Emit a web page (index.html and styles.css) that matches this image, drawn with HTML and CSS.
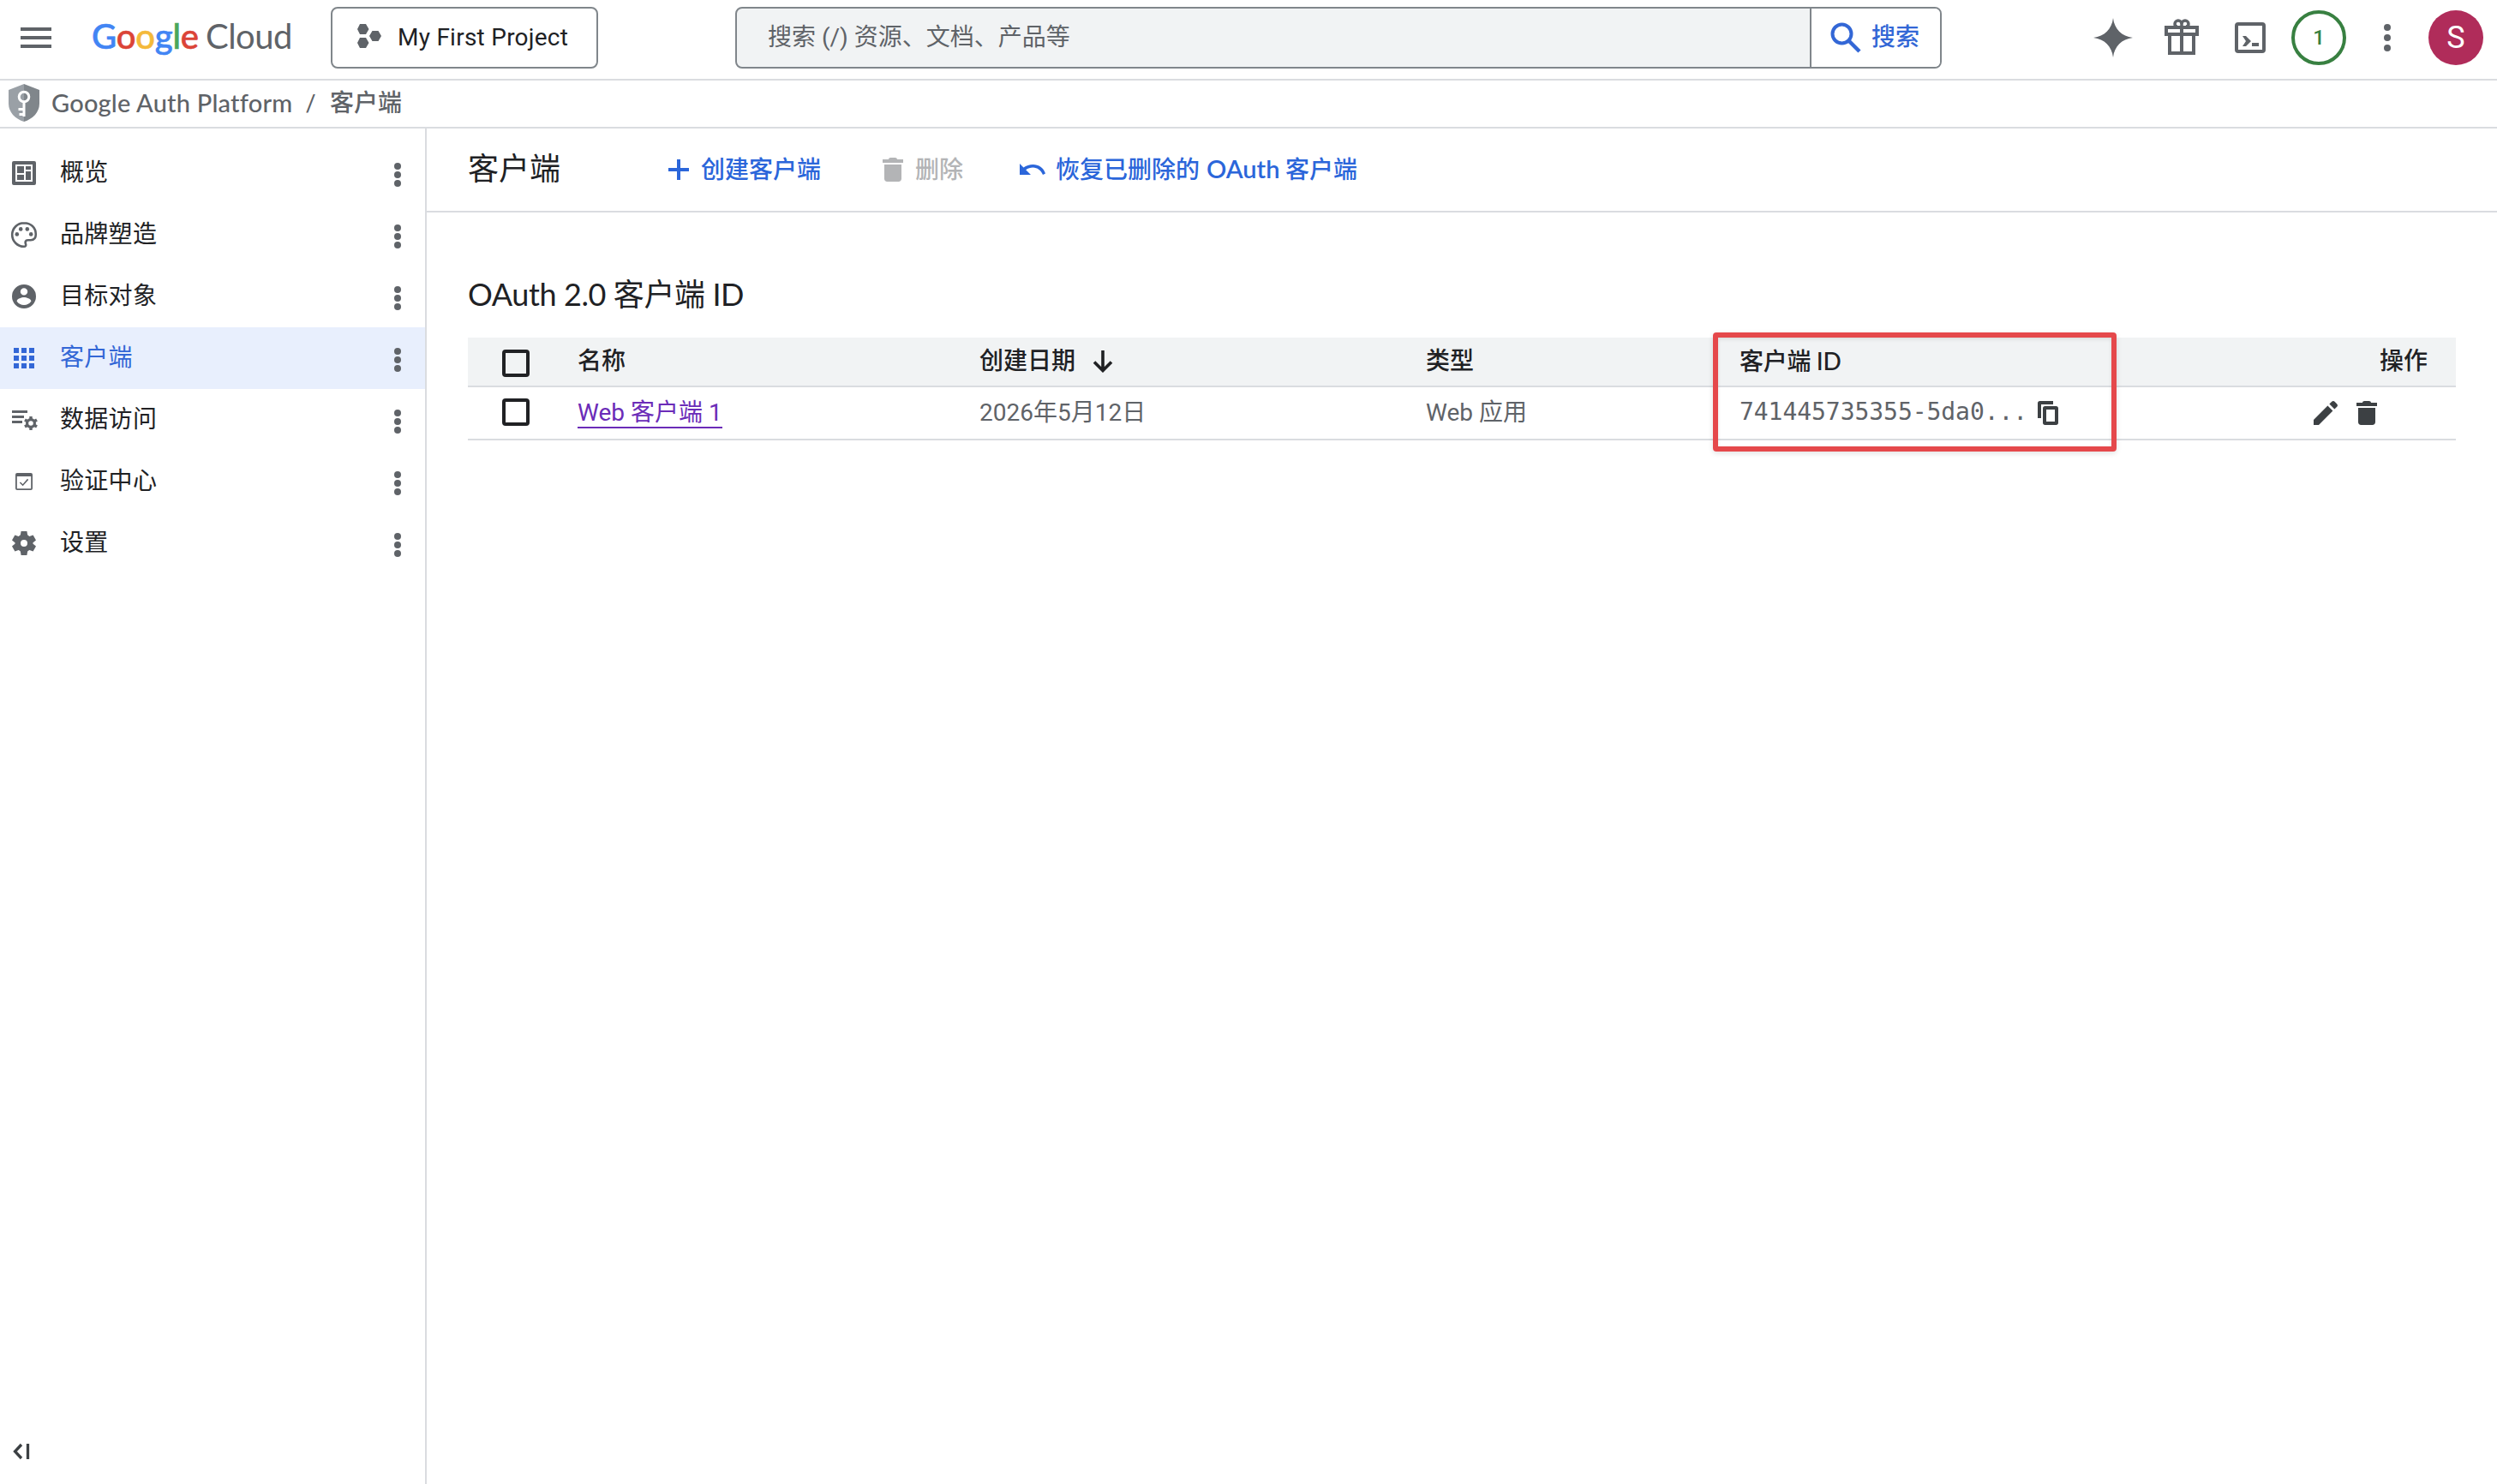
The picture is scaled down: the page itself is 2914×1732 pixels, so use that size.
FILE: index.html
```html
<!DOCTYPE html>
<html lang="zh-CN">
<head>
    <meta charset="UTF-8">
    <meta name="viewport" content="width=device-width, initial-scale=1.0">
    <title>客户端 – Google Auth Platform</title>
    <link rel="stylesheet" href="styles.css">
</head>
<body>
    <svg class="sprite">
        <symbol id="more" viewBox="0 0 18 18"><circle cx="9" cy="4" r="2"/><circle cx="9" cy="9" r="2"/><circle cx="9" cy="14" r="2"/></symbol>
        <symbol id="trash" viewBox="0 0 18 18"><path d="M4 14.3C4 15.3 4.7 16 5.7 16h6.6c1 0 1.7-.7 1.7-1.7V6H4zM15 3h-3.5c0-.6-.5-1-1.2-1H7.700c-.7 0-1.200.4-1.200 1H3v2h12z"/></symbol>
    </svg>

    <header class="topbar">
        <svg class="menu" viewBox="0 0 36 24"><path d="M0 0h36v4H0zM0 10h36v4H0zM0 20h36v4H0z"/></svg>
        <div class="logo"><span class="google"><span class="blue">G</span><span class="red">o</span><span class="yellow">o</span><span class="blue">g</span><span class="green">l</span><span class="red">e</span></span><span class="cloud">Cloud</span></div>
        <button class="project">
            <svg viewBox="0 0 28 28"><path d="M3 0h7l3.500 6-3.500 6H3L0 6zM3 16h7l3.500 6-3.500 6H3l-3-6zM17.500 8h7L28 14l-3.500 6h-7L14 14z"/></svg>
            <span>My First Project</span>
        </button>
        <div class="search">
            <div class="search-input">搜索 (/) 资源、文档、产品等</div>
            <button class="search-btn">
                <svg viewBox="0 0 36 36"><circle cx="13.500" cy="13.500" r="11" fill="none" stroke="currentColor" stroke-width="4"/><path d="M21.500 21.500L34 34" stroke="currentColor" stroke-width="4.500"/></svg>
                <span>搜索</span>
            </button>
        </div>
        <div class="tools">
            <svg class="spark" viewBox="0 0 46 46"><path d="M23 0C24.500 13 33 21.500 46 23 33 24.500 24.500 33 23 46 21.500 33 13 24.500 0 23 13 21.500 21.500 13 23 0z"/></svg>
            <svg class="gift" viewBox="0 0 40 42"><g fill="none" stroke="currentColor" stroke-width="4"><path d="M2 10h36v8H2zM6 18h28v22H6zM20 10v30"/><path d="M20 9V6a4 4 0 1 0-8 0c0 2 1 3 3 3M20 6a4 4 0 1 1 8 0c0 2-1 3-3 3" stroke-width="3.500"/></g></svg>
            <svg class="shell" viewBox="0 0 36 36"><rect x="2" y="2" width="32" height="32" rx="2" fill="none" stroke="currentColor" stroke-width="4"/><path d="M9 16h4l6 6-6 6H9l4-6zM20 24h8v4h-8z"/></svg>
            <span class="notice">1</span>
            <svg class="dots" viewBox="0 0 8 32"><circle cx="4" cy="4" r="4"/><circle cx="4" cy="16" r="4"/><circle cx="4" cy="28" r="4"/></svg>
            <span class="avatar">S</span>
        </div>
    </header>

    <nav class="breadcrumb">
        <svg viewBox="0 0 36 44"><path d="M18 0L0 7v16c0 10 8 18 18 21z" fill="#9aa0a6"/><path d="M18 0l18 7v16c0 10-8 18-18 21z" fill="#80868b"/><circle cx="18" cy="15" r="5.800" fill="none" stroke="#fff" stroke-width="3"/><path d="M16.500 21h3v17h-3v-1h-4v-3h4v-3h-5v-3h5z" fill="#fff"/></svg>
        <span class="platform">Google Auth Platform</span>
        <span class="slash">/</span>
        <span>客户端</span>
    </nav>

    <div class="layout">
        <aside class="sidebar">
            <ul>
                <li>
                    <svg class="icon" viewBox="0 0 18 18"><path fill-rule="evenodd" d="M3 2h12a1 1 0 0 1 1 1v12a1 1 0 0 1-1 1H3a1 1 0 0 1-1-1V3a1 1 0 0 1 1-1zM4 4v10h10V4zM5 5h4v4H5zM10 5h3v2h-3zM5 10h4v3H5zM10 8h3v5h-3z"/></svg>
                    <span>概览</span><svg class="more"><use href="#more"/></svg>
                </li>
                <li>
                    <svg class="icon" viewBox="0 0 18 18"><path d="M9 2.100a6.900 6.900 0 0 0 0 13.800c1 0 1.300-.7 1-1.500-.4-1-.3-2.300 1.300-2.300h1.600c2 0 3-1.300 3-3.300C15.900 4.700 12.800 2.100 9 2.100z" fill="none" stroke="currentColor" stroke-width="1.300"/><circle cx="4.900" cy="8.700" r="1.150"/><circle cx="7.100" cy="5.700" r="1.150"/><circle cx="10.900" cy="5.700" r="1.150"/><circle cx="13.100" cy="8.700" r="1.150"/></svg>
                    <span>品牌塑造</span><svg class="more"><use href="#more"/></svg>
                </li>
                <li>
                    <svg class="icon" viewBox="0 0 18 18"><path fill-rule="evenodd" d="M9 2a7 7 0 1 0 0 14A7 7 0 0 0 9 2zM9 4.100a2.100 2.100 0 1 1 0 4.200 2.100 2.100 0 0 1 0-4.200zM9 14c-1.800 0-3.300-.9-4.200-2.300C4.900 10.300 7.600 9.500 9 9.500s4.100.8 4.200 2.200C12.300 13.100 10.800 14 9 14z"/></svg>
                    <span>目标对象</span><svg class="more"><use href="#more"/></svg>
                </li>
                <li class="active">
                    <svg class="icon" viewBox="0 0 18 18"><path d="M3 3h3v3H3zM7.500 3h3v3h-3zM12 3h3v3h-3zM3 7.500h3v3H3zM7.500 7.500h3v3h-3zM12 7.500h3v3h-3zM3 12h3v3H3zM7.500 12h3v3h-3zM12 12h3v3h-3z"/></svg>
                    <span>客户端</span><svg class="more"><use href="#more"/></svg>
                </li>
                <li>
                    <svg class="icon" viewBox="0 0 18 18"><path d="M2 3.500h9V5H2zM2 6.500h7V8H2zM2 9.500h6V11H2z"/><circle cx="13" cy="11" r="2.200" fill="none" stroke="currentColor" stroke-width="1.600"/><path d="M13 7v1.600M13 13.400V15M9.500 9l1.500.9M15 12.100l1.500.9M9.500 13l1.500-.9M15 9.900l1.500-.9" stroke="currentColor" stroke-width="1.700"/></svg>
                    <span>数据访问</span><svg class="more"><use href="#more"/></svg>
                </li>
                <li>
                    <svg class="icon" viewBox="0 0 18 18"><path fill-rule="evenodd" d="M5 4h8a1 1 0 0 1 1 1v8a1 1 0 0 1-1 1H5a1 1 0 0 1-1-1V5a1 1 0 0 1 1-1zM4.900 6v7.100h8.200V6z"/><path d="M6.700 9.500l1.600 1.600 3-3.400" fill="none" stroke="currentColor" stroke-width=".8"/></svg>
                    <span>验证中心</span><svg class="more"><use href="#more"/></svg>
                </li>
                <li>
                    <svg class="icon" viewBox="0 0 18 18"><circle cx="9" cy="9" r="3.600" fill="none" stroke="currentColor" stroke-width="3.200"/><path d="M7.300 2h3.400l.5 3H6.800zM7.300 16h3.400l.5-3H6.800zM2 7.200l1.700-3 2.800 1.100-2.200 3.800zM16 7.200l-1.700-3-2.800 1.100 2.200 3.800zM2 10.800l1.700 3 2.800-1.100-2.200-3.800zM16 10.800l-1.700 3-2.800-1.100 2.200-3.800z"/></svg>
                    <span>设置</span><svg class="more"><use href="#more"/></svg>
                </li>
            </ul>
            <svg class="collapse" viewBox="0 0 20 20"><path d="M10 2L2.500 10l7.500 8M17.500 1v18" fill="none" stroke="currentColor" stroke-width="3.300"/></svg>
        </aside>

        <main>
            <div class="toolbar">
                <h1>客户端</h1>
                <button class="create">
                    <svg viewBox="0 0 24 24"><path d="M10 0h4v10h10v4H14v10h-4V14H0v-4h10z"/></svg>
                    <span>创建客户端</span>
                </button>
                <button class="delete" disabled>
                    <svg><use href="#trash"/></svg>
                    <span>删除</span>
                </button>
                <button class="restore">
                    <svg viewBox="0 0 30 14"><path d="M0 0l4.500 4.500C7.500 2.200 11.500 1 15.500 1 22 1 28 5 30 11.500L27 13C25 8 20.500 4.500 15.500 4.500c-3 0-6 1-8.300 2.700L13 13H0z"/></svg>
                    <span>恢复已删除的 <span class="latin">OAuth</span> 客户端</span>
                </button>
            </div>

            <section class="content">
                <h2>OAuth 2.0 客户端 ID</h2>
                <table>
                    <colgroup><col class="c-check"><col class="c-name"><col class="c-date"><col class="c-type"><col class="c-id"><col></colgroup>
                    <thead>
                        <tr>
                            <th><span class="checkbox"></span></th>
                            <th>名称</th>
                            <th><div class="cell">创建日期 <svg class="arrow" viewBox="0 0 24 26"><path d="M12 0v23M2 13.500l10 10 10-10" fill="none" stroke="currentColor" stroke-width="3.600"/></svg></div></th>
                            <th>类型</th>
                            <th class="id-head">客户端 ID</th>
                            <th class="right">操作</th>
                        </tr>
                    </thead>
                    <tbody>
                        <tr>
                            <td><span class="checkbox"></span></td>
                            <td><a href="#">Web 客户端 1</a></td>
                            <td>2026年5月12日</td>
                            <td>Web 应用</td>
                            <td>
                                <div class="cell"><span class="client-id">741445735355-5da0...</span><svg class="copy" viewBox="0 0 24 28"><path fill-rule="evenodd" d="M2.500 0H18v4H4v16H0V2.500C0 1 1 0 2.500 0zM8.500 6h13C23 6 24 7 24 8.500v17c0 1.500-1 2.500-2.500 2.500h-13C7 28 6 27 6 25.500v-17C6 7 7 6 8.500 6zM10 10v14h10V10z"/></svg></div>
                            </td>
                            <td>
                                <div class="actions">
                                    <svg viewBox="0 0 18 18"><path d="M2 13v3h3l8.200-8.200-3-3zM15.600 5.400c.5-.5.500-1.200 0-1.700l-1.300-1.300c-.5-.5-1.200-.5-1.700 0l-1.400 1.400 3 3z"/></svg>
                                    <svg><use href="#trash"/></svg>
                                </div>
                            </td>
                        </tr>
                    </tbody>
                </table>
                <div class="highlight"></div>
            </section>
        </main>
    </div>
</body>
</html>
```

FILE: styles.css
```css
* {
    box-sizing: border-box;
}

body {
    margin: 0;
    height: 100vh;
    display: flex;
    flex-direction: column;
    overflow: hidden;
    background: #fff;
    color: #202124;
    font-family: Roboto, "Noto Sans CJK SC", sans-serif;
    font-size: 28px;
    line-height: 40px;
}

svg {
    display: block;
    flex: none;
    fill: currentColor;
}

button {
    display: flex;
    align-items: center;
    padding: 0;
    border: none;
    background: none;
    color: inherit;
    font: inherit;
}

.sprite {
    position: absolute;
    width: 0;
    height: 0;
}

/* top bar */
.topbar {
    display: flex;
    align-items: center;
    height: 94px;
    padding: 0 16px 4px 24px;
    border-bottom: 2px solid #dadce0;
    color: #5f6368;
    flex: none;
}

.menu {
    width: 36px;
    height: 24px;
}

.logo {
    display: flex;
    width: 234px;
    margin: -4px 45px 0 47px;
    justify-content: space-between;
    font-family: Lato, sans-serif;
    font-size: 40px;
    white-space: nowrap;
}

.google {
    font-weight: 500;
    -webkit-text-stroke: 0.6px;
    letter-spacing: -0.2px;
}

.cloud {
    letter-spacing: -0.5px;
}

.blue {
    color: #4285f4;
}

.red {
    color: #db4437;
}

.yellow {
    color: #f4b93a;
}

.green {
    color: #4ca75a;
}

.project {
    width: 312px;
    height: 72px;
    padding-left: 29px;
    gap: 19px;
    border: 2px solid #80868b;
    border-radius: 8px;
    color: #202124;
    letter-spacing: 0.25px;
    white-space: nowrap;
}

.project svg {
    width: 28px;
    height: 28px;
    margin-top: -4px;
    color: #5f6368;
}

.search {
    display: flex;
    width: 1408px;
    height: 72px;
    margin-left: 160px;
    border: 2px solid #80868b;
    border-radius: 8px;
    background: #f1f3f4;
    overflow: hidden;
}

.search-input {
    flex: 1;
    padding: 14px 0 0 36px;
}

.search-btn {
    width: 152px;
    padding-left: 22px;
    gap: 12px;
    border-left: 2px solid #80868b;
    background: #fff;
    color: #3367d6;
    font-weight: 500;
}

.search-btn svg {
    width: 36px;
    height: 36px;
}

.tools {
    display: flex;
    align-items: center;
    margin-left: auto;
}

.spark {
    width: 46px;
    height: 46px;
    margin-right: 37px;
}

.gift {
    width: 40px;
    height: 42px;
    margin: -2px 42px 0 0;
}

.shell {
    width: 36px;
    height: 36px;
    margin-right: 30px;
}

.notice,
.avatar {
    width: 64px;
    height: 64px;
    border-radius: 50%;
    text-align: center;
}

.notice {
    border: 4px solid #388041;
    color: #388041;
    font-size: 24px;
    font-weight: 500;
    line-height: 56px;
}

.dots {
    width: 8px;
    height: 32px;
    margin: 0 44px;
}

.avatar {
    background: #b02c5a;
    color: #fff;
    font-size: 36px;
    line-height: 64px;
}

/* breadcrumb */
.breadcrumb {
    display: flex;
    align-items: center;
    height: 56px;
    padding: 0 10px;
    border-bottom: 2px solid #dadce0;
    color: #5f6368;
    font-weight: 500;
    flex: none;
}

.breadcrumb svg {
    width: 36px;
    height: 44px;
    margin: -2px 14px 0 0;
}

.platform {
    width: 282px;
    margin-top: -2px;
    font-family: Lato, sans-serif;
    font-size: 29px;
    letter-spacing: 0.2px;
    white-space: nowrap;
}

.slash {
    width: 43px;
    padding-left: 15px;
    font-weight: 400;
}

/* sidebar */
.layout {
    display: flex;
    flex: 1;
    min-height: 0;
}

.sidebar {
    display: flex;
    flex-direction: column;
    justify-content: space-between;
    width: 498px;
    border-right: 2px solid #dadce0;
    flex: none;
}

.sidebar ul {
    margin: 0;
    padding: 16px 0 0;
    list-style: none;
}

.sidebar li {
    display: flex;
    align-items: center;
    height: 72px;
    padding: 0 14px 0 10px;
    letter-spacing: 0.3px;
}

.sidebar li span {
    margin: 0 auto 0 24px;
}

.icon,
.more {
    width: 36px;
    height: 36px;
    color: #5f6368;
}

.more {
    margin-top: 4px;
}

.active {
    background: #e8effd;
    color: #3367d6;
}

.active .icon {
    color: #3367d6;
}

.collapse {
    width: 20px;
    height: 20px;
    margin: 0 0 28px 15px;
    color: #3c4043;
}

/* main */
main {
    flex: 1;
}

.toolbar {
    display: flex;
    align-items: center;
    height: 98px;
    padding-left: 48px;
    border-bottom: 2px solid #dadce0;
    color: #2b66da;
    font-weight: 500;
}

.toolbar button > span {
    margin-top: 1px;
}

h1,
h2 {
    margin: 0;
    color: #202124;
    font-size: 36px;
    font-weight: 400;
}

h1 {
    width: 234px;
    line-height: 50px;
}

.create svg {
    width: 24px;
    height: 24px;
    margin-right: 14px;
}

.delete {
    margin-left: 66px;
    color: #b3b4b6;
}

.delete svg {
    width: 36px;
    height: 36px;
    margin-right: 8px;
}

.restore {
    margin-left: 66px;
    white-space: nowrap;
}

.restore svg {
    width: 30px;
    height: 14px;
    margin-right: 12px;
}

.latin {
    display: inline-block;
    width: 86px;
    padding-left: 1px;
    font-family: Lato, sans-serif;
    font-size: 29px;
    font-weight: 600;
    line-height: 38px;
}

.content {
    position: relative;
    padding: 69px 48px 0;
}

h2 {
    height: 77px;
    line-height: 52px;
    font-family: Lato, "Noto Sans CJK SC", sans-serif;
    letter-spacing: -0.4px;
}

table {
    width: 2320px;
    table-layout: fixed;
    border-collapse: separate;
    border-spacing: 0;
}

.c-check {
    width: 128px;
}

.c-name {
    width: 469px;
}

.c-date {
    width: 521px;
}

.c-type {
    width: 366px;
}

.c-id {
    width: 501px;
}

th,
td {
    padding: 0;
    border-bottom: 2px solid #dadce0;
    text-align: left;
    vertical-align: middle;
    white-space: nowrap;
}

th {
    height: 58px;
    background: #f1f3f4;
    font-weight: 500;
}

td {
    height: 62px;
    padding-bottom: 1px;
    color: #5f6368;
}

.id-head {
    padding-bottom: 2px;
    font-family: Lato, "Noto Sans CJK SC", sans-serif;
    letter-spacing: -0.3px;
}

.right {
    padding-right: 33px;
    text-align: right;
}

.checkbox {
    display: block;
    width: 32px;
    height: 32px;
    margin: 3px 0 0 40px;
    border: 4px solid #202124;
    border-radius: 4px;
}

td .checkbox {
    margin-top: -1px;
}

.cell {
    display: flex;
    align-items: center;
}

.arrow {
    width: 24px;
    height: 26px;
    margin-left: 20px;
}

/* underline sits right below the glyphs */
a {
    display: inline-block;
    height: 36px;
    border-bottom: 2px solid #6b2cb8;
    color: #6b2cb8;
    line-height: 36px;
    text-decoration: none;
}

.client-id {
    margin-top: -1px;
    font-family: "DejaVu Sans Mono", monospace;
    font-size: 28px;
    letter-spacing: -0.05px;
}

.copy {
    width: 24px;
    height: 28px;
    margin-left: 12px;
    color: #3c4043;
}

.actions {
    display: flex;
    justify-content: flex-end;
    gap: 12px;
    padding-right: 86px;
    color: #3c4043;
}

.actions svg {
    width: 36px;
    height: 36px;
}

/* red frame over the client ID column */
.highlight {
    position: absolute;
    top: 140px;
    left: 1501px;
    width: 471px;
    height: 139px;
    border: 6px solid #e5484b;
    border-radius: 4px;
    box-shadow: 0 2px 6px rgba(0, 0, 0, 0.12), inset 0 2px 4px rgba(0, 0, 0, 0.1);
}
```
